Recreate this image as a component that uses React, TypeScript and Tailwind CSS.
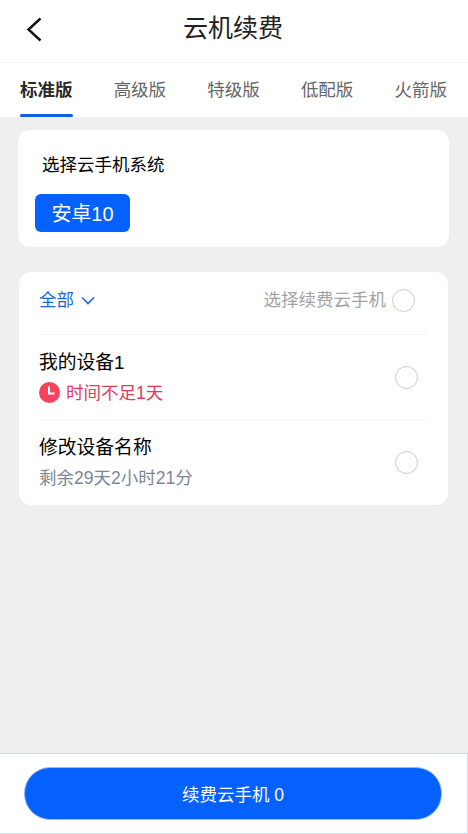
const tabs = ['标准版', '高级版', '特级版', '低配版', '火箭版'];

function Radio() {
  return <div className="w-[23px] h-[23px] rounded-full border-[1.5px] border-[#cccccc] bg-white shrink-0" />;
}

export default function App() {
  return (
    <div
      className="w-[468px] h-[834px] bg-[#efefef] flex flex-col overflow-hidden"
      style={{ fontFamily: '"Liberation Sans", "Noto Sans CJK SC", sans-serif' }}
    >
      {/* Header */}
      <div className="h-[63px] shrink-0 bg-white border-b border-[#f6f6f6] flex items-center justify-center relative">
        <svg className="absolute left-[24px] top-[16px]" width="20" height="26" viewBox="0 0 20 26" fill="none">
          <path d="M16.5 2.5 4.5 13.5l12 11" stroke="#111111" strokeWidth="2.4" />
        </svg>
        <span className="text-[25px] leading-[56px] -mt-[6px] -ml-[2px] text-[#222222]">云机续费</span>
      </div>

      {/* Tabs */}
      <div className="h-[54px] shrink-0 bg-white flex justify-between pl-[20px] pr-[21px]">
        {tabs.map((t, i) => (
          <div key={t} className="relative h-full flex items-center">
            <span className={`text-[17.5px] leading-[54px] -mt-[1px] ${i === 0 ? 'font-bold text-[#2a2a2a]' : 'text-[#666666]'}`}>{t}</span>
            {i === 0 && <div className="absolute left-0 right-0 bottom-0 h-[3px] rounded-full bg-[#0a5fe8]" />}
          </div>
        ))}
      </div>

      <div className="flex-1 flex flex-col">
        {/* System card */}
        <div className="mt-[13px] ml-[18px] w-[431px] h-[117px] bg-white rounded-[12px] pl-[17px] pt-[23px]">
          <div className="pl-[7px] text-[17.5px] leading-[25px] text-black">选择云手机系统</div>
          <div className="mt-[16px] w-[95px] h-[38px] pt-[2px] rounded-[6px] bg-[#0561fe] text-white text-[20px] flex items-center justify-center">
            安卓10
          </div>
        </div>

        {/* Device card */}
        <div className="mt-[25px] ml-[19px] w-[429px] h-[233px] bg-white rounded-[12px] px-[20px]">
          <div className="h-[63px] pb-[6px] flex items-center justify-between border-b border-[#f5f5f5]">
            <div className="flex items-center gap-[7px] text-[#1f66d8] text-[17.5px]">
              全部
              <svg width="14" height="9" viewBox="0 0 14 9" fill="none">
                <path d="M1 1.5 7 7.5l6-6" stroke="#1f66d8" strokeWidth="1.6" />
              </svg>
            </div>
            <div className="flex items-center gap-[6px] pr-[13px] text-[#a3a3a3] text-[17.5px]">
              选择续费云手机
              <Radio />
            </div>
          </div>

          <div className="h-[85px] flex items-center justify-between border-b border-[#f5f5f5] pr-[10px]">
            <div>
              <div className="text-[18.8px] leading-[28px] -mt-[1px] text-black">我的设备1</div>
              <div className="flex items-center gap-[6px] mt-[4px]">
                <svg width="21" height="21" viewBox="0 0 21 21">
                  <defs>
                    <linearGradient id="clk" x1="0" y1="0" x2="1" y2="1">
                      <stop offset="0" stopColor="#f0455a" />
                      <stop offset="1" stopColor="#ff3f63" />
                    </linearGradient>
                  </defs>
                  <circle cx="10.5" cy="10.5" r="10.5" fill="url(#clk)" />
                  <path d="M10 4.5v7h5.5" fill="none" stroke="#fff" strokeWidth="2" />
                </svg>
                <span className="text-[17.5px] leading-[24px] text-[#e5395a]">时间不足1天</span>
              </div>
            </div>
            <Radio />
          </div>

          <div className="h-[85px] flex items-center justify-between pr-[10px]">
            <div>
              <div className="text-[18.8px] leading-[28px] -mt-[1px] text-black">修改设备名称</div>
              <div className="mt-[4px] text-[17.5px] leading-[24px] text-[#7c8798]">剩余29天2小时21分</div>
            </div>
            <Radio />
          </div>
        </div>
      </div>

      {/* Footer */}
      <div className="h-[81px] shrink-0 bg-white border-t border-b border-r border-[#c9dcf2] flex items-center pl-[24px]">
        <button className="w-[418px] h-[53px] pt-[3px] rounded-[26px] bg-[#0561fe] border border-[#9dbdf0] text-white text-[17.5px]">
          续费云手机 0
        </button>
      </div>
    </div>
  );
}
